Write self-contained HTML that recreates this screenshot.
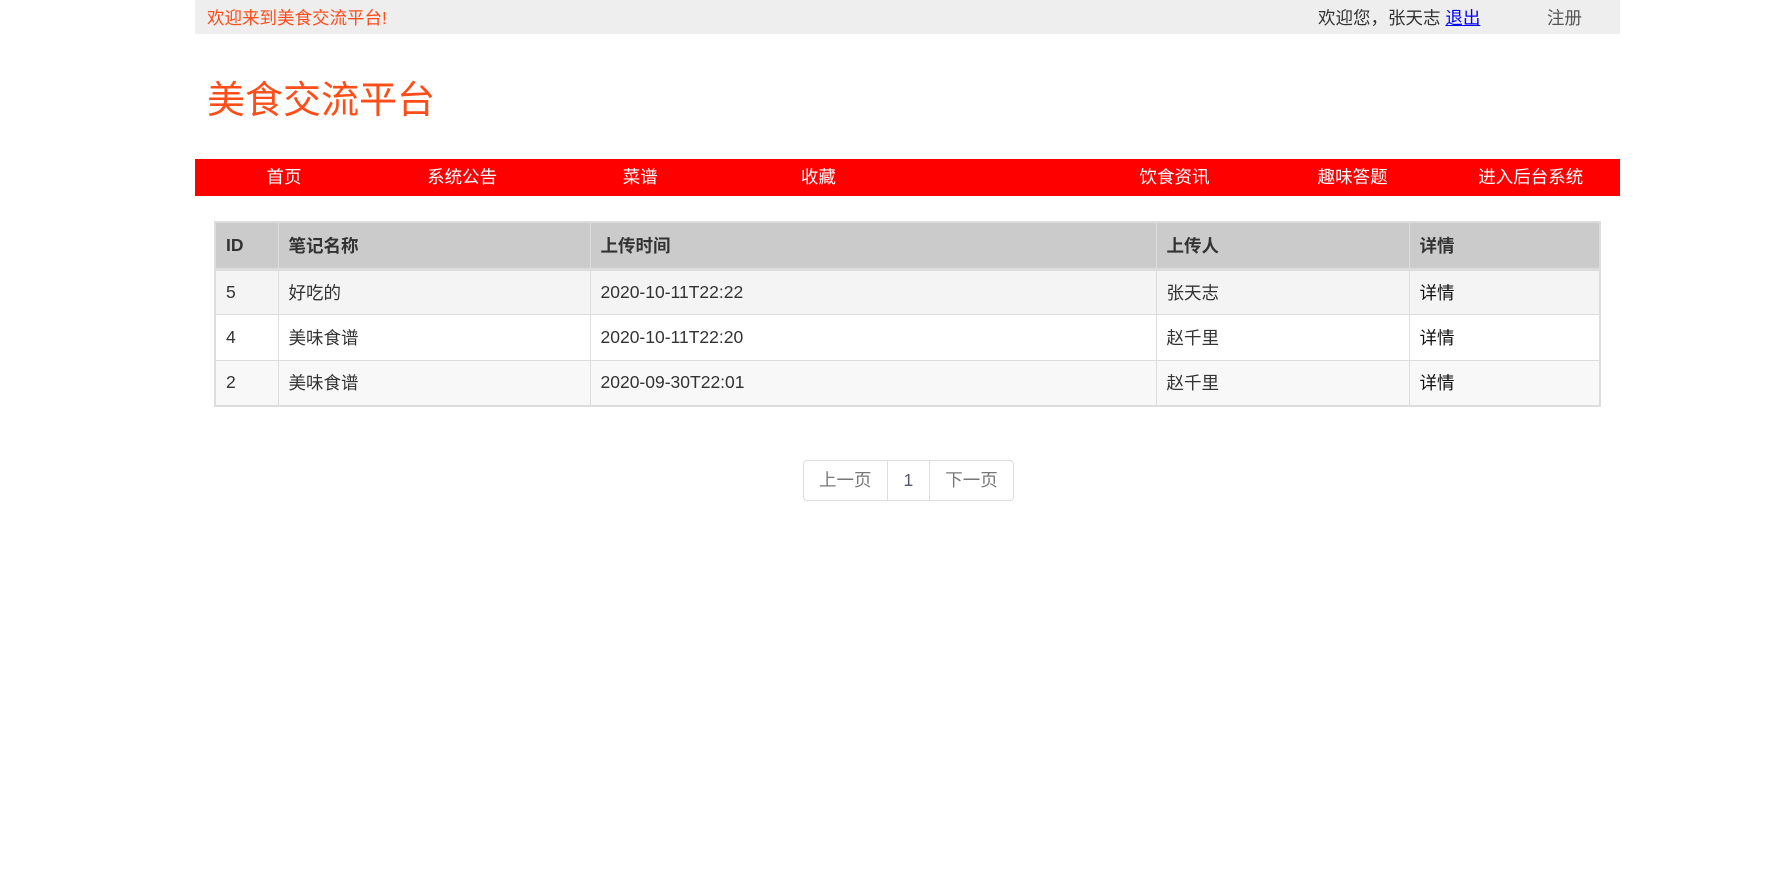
<!DOCTYPE html>
<html><head><meta charset="utf-8"><style>
*{margin:0;padding:0;box-sizing:border-box}
body{width:1785px;height:876px;background:#fff;font-family:"Liberation Sans","Noto Sans CJK SC",sans-serif;font-size:17.5px;color:#333;position:relative;overflow:hidden}
.top{position:absolute;left:195px;top:0;width:1425px;height:34px;background:#eee}
.top .l{position:absolute;left:12px;top:5px;color:#ff4d1a}
.top .r{position:absolute;left:1123px;top:5px;color:#333}
.top .r a{color:#00f;text-decoration:underline}
.top .z{position:absolute;left:1352px;top:5px;color:#555}
.title{position:absolute;left:207px;top:69px;font-size:38px;color:#ff4d1a}
.nav{position:absolute;left:195px;top:159px;width:1425px;height:37px;background:#f00;display:flex}
.nav div{width:178.1px;text-align:center;color:#fff;line-height:37px}
table{position:absolute;left:214px;top:221px;width:1387px;border-collapse:collapse;border:2px solid #ddd}
td,th{border:1px solid #ddd;text-align:left;padding:0 10px;height:45.5px;font-weight:normal}
th{background:#cbcbcb;font-weight:bold;border-bottom:3px solid #ddd;height:47px}
tr.a td{background:#f4f4f4}tr.c td{background:#f8f8f8}
.pg{position:absolute;left:803px;top:460px;height:41px;display:flex;border:1px solid #ddd;border-radius:4px;color:#777}
.pg div{line-height:39px;padding:0 15px;border-left:1px solid #ddd}
.pg div:first-child{border-left:none}
</style></head><body>
<div class="top"><span class="l">欢迎来到美食交流平台!</span><span class="r">欢迎您，张天志 <a>退出</a></span><span class="z">注册</span></div>
<div class="title">美食交流平台</div>
<div class="nav"><div>首页</div><div>系统公告</div><div>菜谱</div><div>收藏</div><div></div><div>饮食资讯</div><div>趣味答题</div><div>进入后台系统</div></div>
<table>
<tr><th style="width:63px">ID</th><th style="width:312px">笔记名称</th><th style="width:566px">上传时间</th><th style="width:253px">上传人</th><th>详情</th></tr>
<tr class="a"><td>5</td><td>好吃的</td><td>2020-10-11T22:22</td><td>张天志</td><td style="color:#111">详情</td></tr>
<tr><td>4</td><td>美味食谱</td><td>2020-10-11T22:20</td><td>赵千里</td><td style="color:#111">详情</td></tr>
<tr class="c"><td>2</td><td>美味食谱</td><td>2020-09-30T22:01</td><td>赵千里</td><td style="color:#111">详情</td></tr>
</table>
<div class="pg"><div>上一页</div><div style="color:#557;padding:0 16px">1</div><div>下一页</div></div>
</body></html>
